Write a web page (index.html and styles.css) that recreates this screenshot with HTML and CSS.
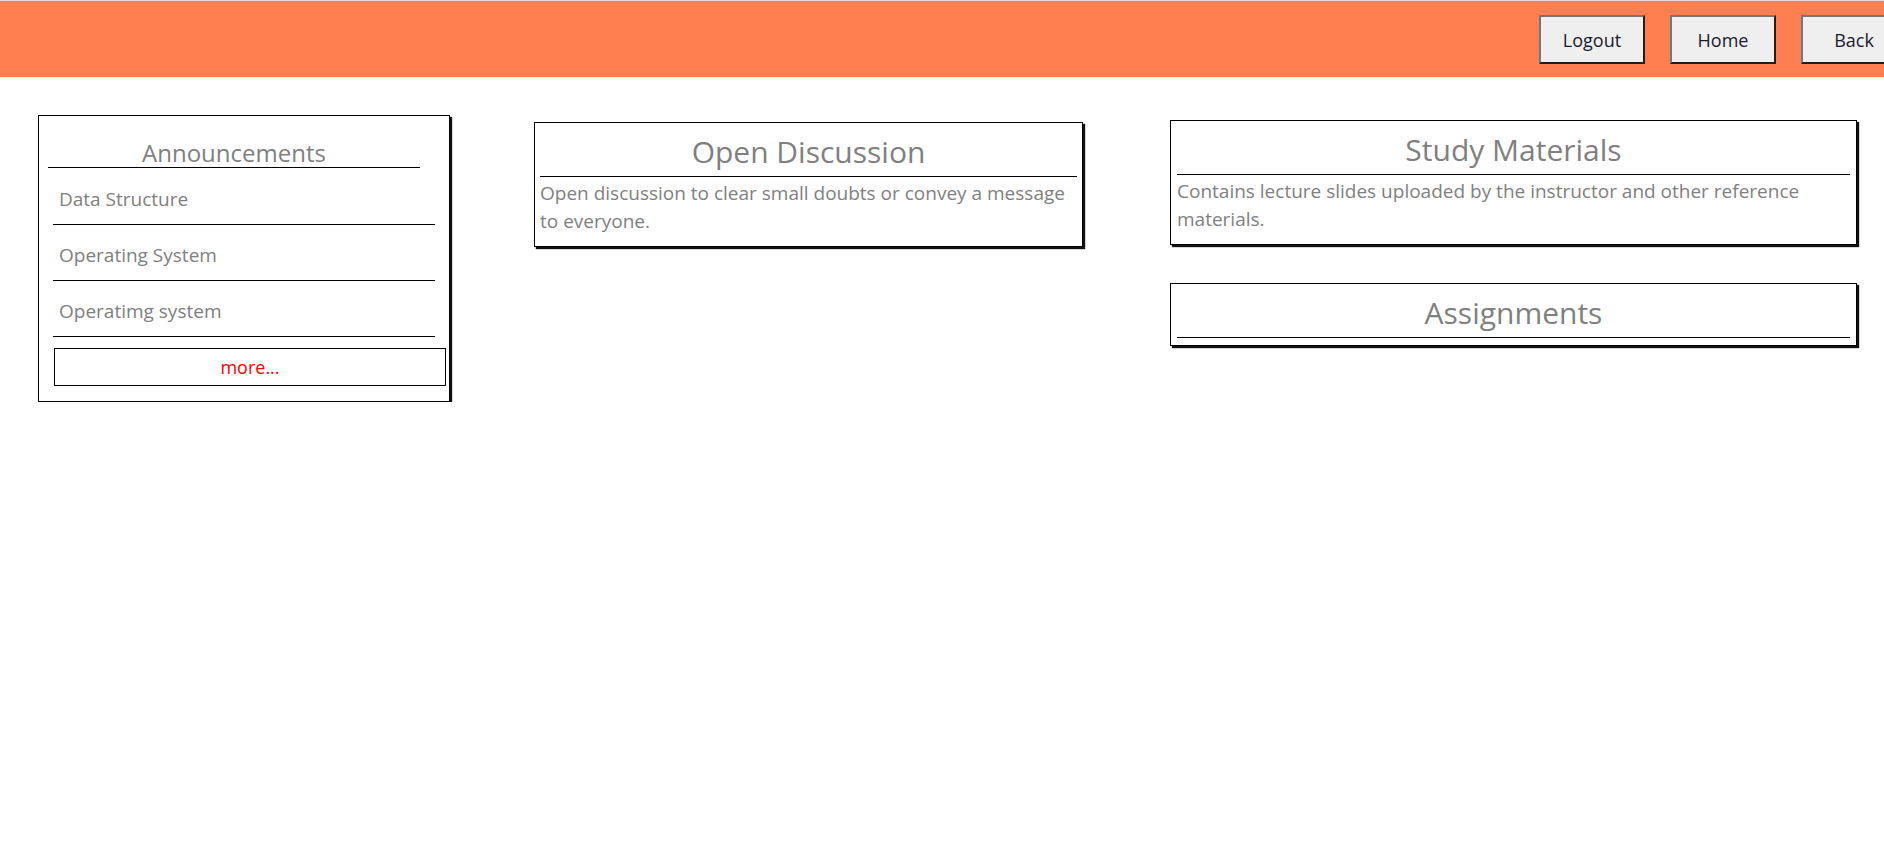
FILE: index.html
```html
<!DOCTYPE html>
<html lang="en">
<head>
<meta charset="utf-8">
<title>Course</title>
<link rel="stylesheet" href="styles.css">
</head>
<body>
<header class="topbar">
  <nav class="nav">
    <button class="nav-btn">Logout</button>
    <button class="nav-btn">Home</button>
    <button class="nav-btn">Back</button>
  </nav>
</header>
<main class="content">
  <section class="col col-left">
    <div class="card announce">
      <h3 class="announce-title">Announcements</h3>
      <ul class="announce-list">
        <li>Data Structure</li>
        <li>Operating System</li>
        <li>Operatimg system</li>
      </ul>
      <div class="more">more...</div>
    </div>
  </section>
  <section class="col col-mid">
    <div class="card">
      <h2 class="card-title">Open Discussion</h2>
      <p class="card-text">Open discussion to clear small doubts or convey a message to everyone.</p>
    </div>
  </section>
  <section class="col col-right">
    <div class="card card-wide">
      <h2 class="card-title">Study Materials</h2>
      <p class="card-text">Contains lecture slides uploaded by the instructor and other reference materials.</p>
    </div>
    <div class="card card-wide card-assign">
      <h2 class="card-title">Assignments</h2>
    </div>
  </section>
</main>
</body>
</html>
```
FILE: styles.css
```css
html, body {
  margin: 0;
  padding: 0;
  background: #fff;
  font-family: "Open Sans", sans-serif;
  overflow-x: hidden;
}

.topbar {
  border-top: 1px solid #dcdcdc;
  height: 76px;
  background: #ff7f50;
  display: flex;
  justify-content: flex-end;
  align-items: flex-start;
  overflow: hidden;
}

.nav {
  display: flex;
  gap: 25px;
  margin-top: 14px;
  margin-right: -23px;
  flex-shrink: 0;
}

.nav-btn {
  width: 106px;
  height: 49px;
  flex-shrink: 0;
  background: #efefef;
  border: 2px solid;
  border-color: #767676 #1f1f1f #1f1f1f #767676;
  font-family: "Open Sans", sans-serif;
  font-size: 18px;
  color: #1a1a2e;
  padding: 0;
}

.content {
  display: flex;
  align-items: flex-start;
}

.col {
  display: flex;
  flex-direction: column;
}

.col-left {
  width: 412px;
  margin: 38px 0 0 38px;
}

.col-mid {
  width: 549px;
  margin: 45px 0 0 84px;
}

.col-right {
  width: 687px;
  margin: 43px 0 0 87px;
  gap: 38px;
}

.card {
  border: 1px solid #000;
  box-shadow: 2px 2px 1px #111;
  padding: 0 5px 11px;
  color: #808080;
}

.card-wide {
  padding-left: 6px;
  padding-right: 6px;
}

.card-title {
  margin: 0;
  padding: 5px 0 0;
  height: 48px;
  line-height: 48px;
  box-sizing: content-box;
  font-size: 30px;
  font-weight: 400;
  text-align: center;
  border-bottom: 1px solid #000;
}

.card-text {
  margin: 2px 0 0;
  font-size: 19px;
  line-height: 28px;
}

.card-assign {
  padding-bottom: 7px;
}

/* Announcements */
.announce {
  padding: 0 0 15px;
}

.announce-title {
  margin: 22px 29px 0 9px;
  font-size: 24px;
  font-weight: 400;
  line-height: 29px;
  text-align: center;
  border-bottom: 1px solid #000;
}

.announce-list {
  list-style: none;
  margin: 1px 14px 0;
  padding: 0;
}

.announce-list li {
  height: 56px;
  box-sizing: border-box;
  line-height: 20px;
  padding: 5px 0 0 6px;
  font-size: 19px;
  border-bottom: 1px solid #000;
  display: flex;
  align-items: center;
}

.more {
  margin: 11px 3px 0 15px;
  height: 36px;
  border: 1px solid #000;
  color: #ff0000;
  font-size: 18px;
  display: flex;
  align-items: center;
  justify-content: center;
}
```
